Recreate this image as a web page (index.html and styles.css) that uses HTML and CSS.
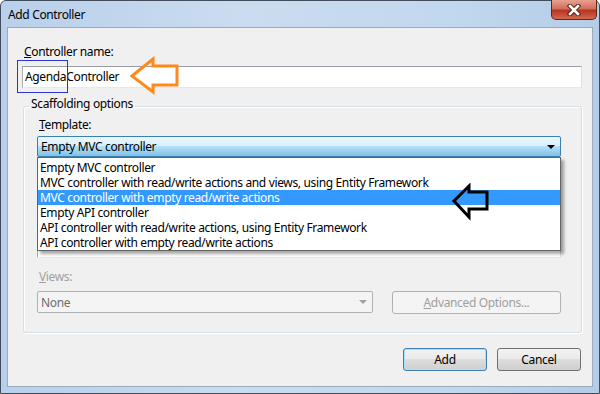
FILE: index.html
```html
<!DOCTYPE html>
<html>
	<head>
		<meta charset="UTF-8">
		<title>Add Controller</title>
		<link rel="stylesheet" href="styles.css">
	</head>
	<body>
		<div class="window">
			<div class="titlebar">
				<span class="title">Add Controller</span>
				<span class="close">
					<svg width="16" height="12" viewBox="0 0 16 12">
						<path d="M4 2 L12 10 M12 2 L4 10" stroke="#4a1a14" stroke-width="4.4" stroke-linecap="square"/>
						<path d="M4 2 L12 10 M12 2 L4 10" stroke="#fff" stroke-width="2.6" stroke-linecap="square"/>
					</svg>
				</span>
			</div>
			<div class="client">
				<div class="lbl"><u>C</u>ontroller name:</div>
				<div class="namebox">
					<div class="textbox">AgendaController</div>
					<span class="mark"></span>
					<svg class="arrow-orange" width="74" height="40" viewBox="0 0 74 40">
						<polygon points="25,20 46,3 46,10 70,10 70,29 46,29 46,36" fill="none" stroke="#ff8a1c" stroke-width="3" stroke-linejoin="miter"/>
					</svg>
				</div>
				<fieldset class="group">
					<legend>Scaffolding options</legend>
					<div class="lbl"><u>T</u>emplate:</div>
					<div class="combo-wrap">
						<div class="combo focused">
							<span>Empty MVC controller</span>
							<span class="caret"></span>
						</div>
						<ul class="droplist">
							<li>Empty MVC controller</li>
							<li>MVC controller with read/write actions and views, using Entity Framework</li>
							<li class="selected">MVC controller with empty read/write actions</li>
							<li>Empty API controller</li>
							<li>API controller with read/write actions, using Entity Framework</li>
							<li>API controller with empty read/write actions</li>
						</ul>
						<svg class="arrow-black" width="40" height="38" viewBox="0 0 40 38">
							<polygon points="3,18 18,3 18,9 36,9 36,26 18,26 18,34" fill="none" stroke="#000" stroke-width="3"/>
						</svg>
					</div>
					<div class="textbox hidden-box"></div>
					<div class="lbl off"><u>V</u>iews:</div>
					<div class="views-row">
						<div class="combo off">
							<span>None</span>
							<span class="caret"></span>
						</div>
						<div class="btn off"><u>A</u>dvanced Options...</div>
					</div>
				</fieldset>
				<div class="actions">
					<div class="btn default">Add</div>
					<div class="btn">Cancel</div>
				</div>
			</div>
		</div>
	</body>
</html>
```

FILE: styles.css
```css
html,body{
	margin: 0;
	padding: 0;
}
body{
	width: 600px;
	height: 394px;
	overflow: hidden;
	background: #fff;
	font-family: "Noto Sans", "Liberation Sans", sans-serif;
	font-size: 12px;
	letter-spacing: -0.35px;
	color: #000;
}
.window{
	box-sizing: border-box;
	width: 600px;
	height: 394px;
	border: 1px solid #414d5c;
	border-radius: 6px 6px 0 0;
	background: linear-gradient(90deg, #b8d0ea, #cadcf0 40%, #c2d8ee 75%, #b4cce6);
	display: flex;
	flex-direction: column;
}
.titlebar{
	height: 26px;
	display: flex;
	justify-content: space-between;
	align-items: flex-start;
	padding-left: 7px;
}
.title{
	margin-top: 6px;
	line-height: 16px;
	color: #000;
}
.close{
	box-sizing: border-box;
	width: 46px;
	height: 20px;
	margin: -1px 2px 0 0;
	border: 1px solid #5a2620;
	border-top: none;
	border-radius: 0 0 5px 5px;
	background: linear-gradient(#e8a090, #d0705c 45%, #b8341e 55%, #d06a52);
	display: flex;
	align-items: center;
	justify-content: center;
}
.client{
	box-sizing: border-box;
	height: 360px;
	margin: 0 6px;
	border: 1px solid #9aabbf;
	background: #f0f0f0;
	padding: 16px 10px 0 14px;
}
.lbl{
	line-height: 16px;
	margin-left: 2px;
}
.lbl.off{
	color: #a0a0a0;
	margin-top: 11px;
}
.namebox{
	position: relative;
	margin-top: 6px;
}
.textbox{
	box-sizing: border-box;
	height: 22px;
	line-height: 20px;
	padding-left: 2px;
	background: #fff;
	border: 1px solid #abadb3;
	border-top-color: #9a9ca3;
	border-right-color: #dbdfe6;
	border-bottom-color: #e3e9ef;
}
.mark{
	position: absolute;
	left: -5px;
	top: -6px;
	width: 49px;
	height: 31px;
	border: 1px solid #2a35d8;
}
.arrow-orange{
	position: absolute;
	left: 85px;
	top: -10px;
}
.group{
	margin: 9px 0 0 1px;
	padding: 2px 20px 18px 13px;
	border: 1px solid #d5dfe5;
	border-radius: 3px;
	box-shadow: inset 1px 1px 0 #fff, 1px 1px 0 #fff;
}
.group legend{
	margin-left: -8px;
	padding: 0 2px 4px;
	line-height: 14px;
}
.combo-wrap{
	position: relative;
	margin-top: 3px;
}
.combo{
	box-sizing: border-box;
	height: 21px;
	padding: 0 5px 0 3px;
	border: 1px solid #8e8f8f;
	border-radius: 2px;
	display: flex;
	justify-content: space-between;
	align-items: center;
	background: #f4f4f4;
}
.combo.focused{
	border-color: #3c7fb1;
	background: linear-gradient(#eaf6fd, #d9f0fc 45%, #b6e0f8 50%, #7fc0e8);
}
.caret{
	width: 0;
	height: 0;
	border-left: 4px solid transparent;
	border-right: 4px solid transparent;
	border-top: 4px solid #000;
}
.combo.off{
	width: 336px;
	height: 22px;
	border-color: #adb2b5;
	color: #6d6d6d;
}
.combo.off .caret{
	border-top-color: #a0a0a0;
}
.droplist{
	position: absolute;
	left: 0;
	right: 0;
	top: 100%;
	margin: 0;
	padding: 2px 0 0;
	list-style: none;
	background: #fff;
	border: 1px solid #646464;
	box-shadow: 3px 3px 3px rgba(0,0,0,.35);
	z-index: 2;
}
.droplist li{
	height: 15px;
	line-height: 15px;
	padding-left: 2px;
	white-space: nowrap;
}
.droplist li.selected{
	background: #3399ff;
	color: #fff;
}
.arrow-black{
	position: absolute;
	left: 414px;
	top: 47px;
	z-index: 3;
}
.hidden-box{
	margin-top: 79px;
}
.views-row{
	margin-top: 6px;
	display: flex;
	justify-content: space-between;
	align-items: flex-start;
}
.btn{
	box-sizing: border-box;
	width: 84px;
	height: 23px;
	line-height: 21px;
	text-align: center;
	border: 1px solid #707070;
	border-radius: 3px;
	background: linear-gradient(#f2f2f2, #ebebeb 45%, #dddddd 50%, #cfcfcf);
}
.btn.off{
	width: 169px;
	color: #a0a0a0;
	border-color: #adb2b5;
	background: #f4f4f4;
}
.btn.default{
	border-color: #3c7fb1;
	box-shadow: inset 0 0 0 1px #aedff7;
}
.actions{
	margin: 15px 1px 0 0;
	display: flex;
	justify-content: flex-end;
	gap: 10px;
}
```
